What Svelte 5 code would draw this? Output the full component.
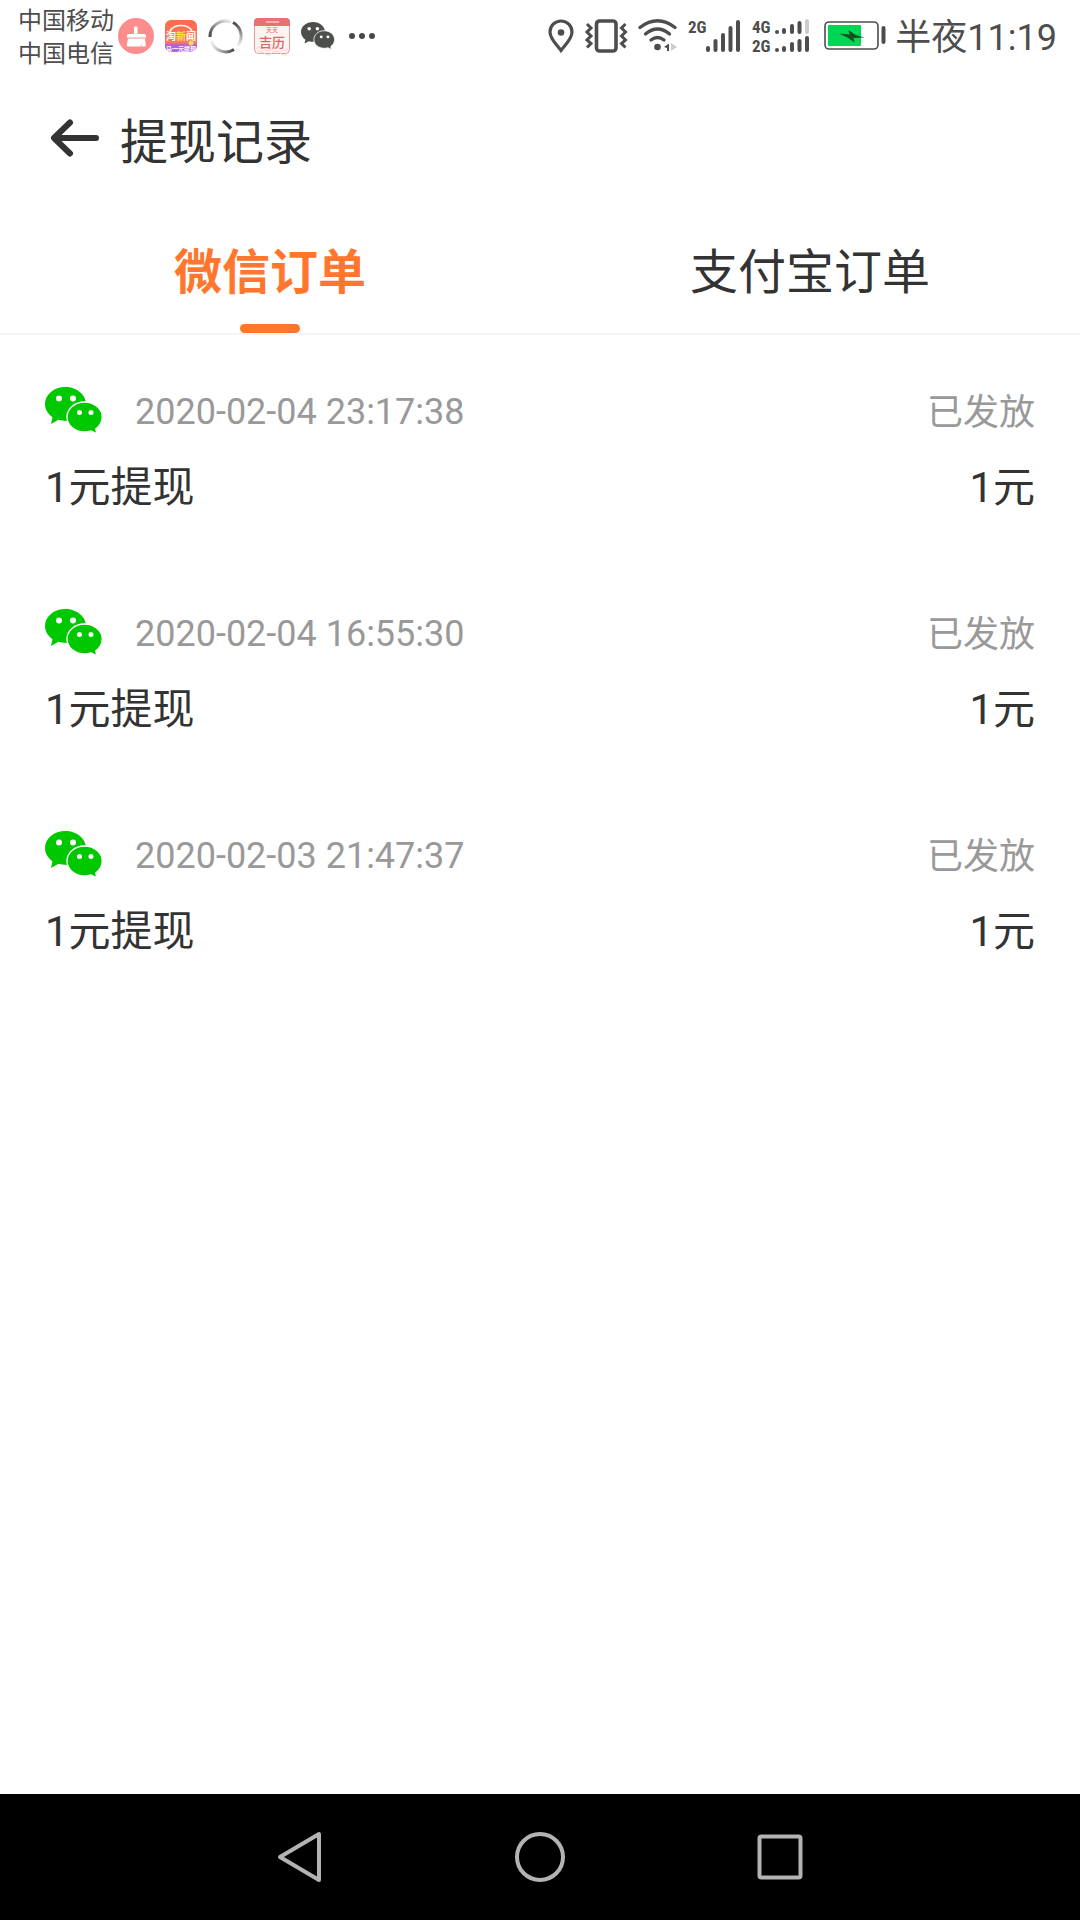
<script lang="ts">
  const tabs = [
    { id: 'wechat', label: '微信订单' },
    { id: 'alipay', label: '支付宝订单' },
  ];

  const orders = [
    { time: '2020-02-04 23:17:38', status: '已发放', title: '1元提现', amount: '1元' },
    { time: '2020-02-04 16:55:30', status: '已发放', title: '1元提现', amount: '1元' },
    { time: '2020-02-03 21:47:37', status: '已发放', title: '1元提现', amount: '1元' },
  ];

  let active = $state('wechat');
</script>

<div class="screen">
  <div class="status-bar">
    <div class="status-left">
      <div class="carriers">
        <span>中国移动</span>
        <span>中国电信</span>
      </div>
      <div class="notices">
        <svg width="36" height="36" viewBox="0 0 36 36">
          <circle cx="18" cy="18" r="18" fill="#fd8d8d" />
          <path d="M16 10a1.700 1.700 0 0 1 3.500 0v6h7a1.500 1.500 0 0 1 1.500 1.500v2h-19v-2a1.500 1.500 0 0 1 1.500-1.500h5.500z" fill="#fff" />
          <path d="M10 20.500h17l.8 8h-4.300v-3l-1 3h-12.500c-1 0-1.400-.6-1.200-1.400z" fill="#fff" />
        </svg>
        <svg width="32" height="34" viewBox="0 0 32 34">
          <defs>
            <linearGradient id="news" x1="0" y1="0" x2="0" y2="1">
              <stop offset="0" stop-color="#fb6a4b" />
              <stop offset="0.7" stop-color="#fb7a60" />
              <stop offset="0.78" stop-color="#b162d8" />
              <stop offset="1" stop-color="#b368dc" />
            </linearGradient>
          </defs>
          <rect y="1" width="32" height="32" rx="6" fill="url(#news)" />
          <path d="M5 12a12 9 0 0 1 22 0" fill="none" stroke="#fff" stroke-width="1.500" />
          <text x="16" y="21" class="news-name">淘<tspan fill="#ffe14d">新</tspan>闻</text>
          <circle cx="26" cy="24" r="2.500" fill="#ffd95a" />
          <text x="16" y="32" class="news-note">马一元提现</text>
        </svg>
        <svg width="35" height="36" viewBox="0 0 35 36" fill="none" stroke-width="3">
          <defs>
            <linearGradient id="arcA" x1="0" y1="1" x2="1" y2="0">
              <stop offset="0" stop-color="#444" />
              <stop offset="1" stop-color="#eee" />
            </linearGradient>
            <linearGradient id="arcB" x1="0" y1="0" x2="0" y2="1">
              <stop offset="0" stop-color="#444" />
              <stop offset="1" stop-color="#f2f2f2" />
            </linearGradient>
            <linearGradient id="arcC" x1="0" y1="0" x2="1" y2="0">
              <stop offset="0" stop-color="#f2f2f2" />
              <stop offset="1" stop-color="#444" />
            </linearGradient>
          </defs>
          <path d="M2 19a15.500 15.500 0 0 1 21-15" stroke="url(#arcA)" />
          <path d="M25 4.500a15.500 15.500 0 0 1 5 23" stroke="url(#arcB)" />
          <path d="M3 23a15.500 15.500 0 0 0 23 8.500" stroke="url(#arcC)" />
        </svg>
        <svg width="36" height="36" viewBox="0 0 36 36">
          <rect x="0.500" y="0.500" width="35" height="35" rx="4" fill="#fdf4f2" stroke="#e99" />
          <path d="M0 8v-4a4 4 0 0 1 4-4h28a4 4 0 0 1 4 4v4z" fill="#e57373" />
          <path d="M12 4h13" stroke="#f8c9c9" stroke-width="1.500" />
          <path d="M2 31q4-4 8 0t8 0t8 0t8 0M2 35q4-4 8 0t8 0t8 0t8 0" fill="none" stroke="#f6d6d0" />
          <text x="18" y="14" class="cal-small">天天</text>
          <text x="18" y="29" class="cal-name">吉历</text>
        </svg>
        <svg width="34" height="30" viewBox="0 0 58 48">
          {@render bubbles('#4c4f4c')}
        </svg>
        <svg width="32" height="6" viewBox="0 0 32 6" fill="#484848">
          <circle cx="6" cy="3" r="3" />
          <circle cx="16" cy="3" r="3" />
          <circle cx="26" cy="3" r="3" />
        </svg>
      </div>
    </div>

    <div class="status-right">
      <svg width="26" height="34" viewBox="0 0 26 34">
        <path d="M13 31.500C9 26 2 20 2 13a11 11 0 0 1 22 0c0 7-7 13-11 18.500z" fill="none" stroke="#4d4d4d" stroke-width="3.200" />
        <circle cx="13" cy="13.500" r="3.300" fill="#4d4d4d" />
      </svg>
      <svg width="42" height="34" viewBox="0 0 42 34" fill="none" stroke="#4d4d4d" stroke-width="3">
        <rect x="11.500" y="2" width="19.500" height="30" rx="3" stroke-width="3.600" />
        <path d="M2 5l4 4-4 4 4 4-4 4 4 3.500-4 4M40.500 5l-4 4 4 4-4 4 4 4-4 3.500 4 4" />
      </svg>
      <svg width="39" height="34" viewBox="0 0 39 34" fill="none" stroke="#4d4d4d" stroke-width="3.400" stroke-linecap="round">
        <path d="M2 8.500q17.500-13.500 35 0M7.500 15q12-10 24 0M13 21q6.500-5 13 0" />
        <circle cx="19.500" cy="28" r="3.300" fill="#4d4d4d" stroke="none" />
        <path d="M31 24.500v7.500h-2v-3l-3-1z" fill="#4d4d4d" stroke="none" />
        <path d="M33 24l6 4-6 4z" fill="#ccc" stroke="none" />
      </svg>
      <svg width="53" height="36" viewBox="0 0 53 36" fill="none" stroke="#4d4d4d" stroke-width="4" stroke-linecap="round">
        <text x="0" y="15" class="net">2G</text>
        <path d="M20 30v2M27.500 23v9M35 17v15M42.500 10v22M50 4v28" />
      </svg>
      <svg width="58" height="36" viewBox="0 0 58 36" fill="none" stroke="#4d4d4d" stroke-width="4" stroke-linecap="round">
        <text x="0" y="15" class="net">4G</text>
        <text x="0" y="34" class="net">2G</text>
        <path d="M25 14v0M32 12v2M40 8v6M47.500 5v9M25 32v0M32 30v2M40 26v6M47.500 23v9M55 20v12" />
        <path d="M55 3v11" stroke="#ccc" />
      </svg>
      <svg class="battery" width="62" height="30" viewBox="0 0 62 30">
        <rect x="1" y="1" width="53" height="27" rx="4" fill="#fff" stroke="#4d4d4d" stroke-width="1.600" />
        <rect x="4" y="4" width="33" height="21" rx="1" fill="#00d656" />
        <path d="M15 12.500l10.500 1-1-4.500 7 5 9 2.500-11 .5 1 4.500-7-5z" fill="#154f20" />
        <path d="M59.500 7v14" stroke="#4d4d4d" stroke-width="4" stroke-linecap="round" />
      </svg>
      <span class="clock">半夜11:19</span>
    </div>
  </div>

  <header class="header">
    <button class="back" aria-label="返回">
      <svg width="50" height="38" viewBox="0 0 50 38" fill="none" stroke="#333" stroke-width="6" stroke-linecap="round" stroke-linejoin="round">
        <path d="M20 3.500L4 19l16 15.500M5 19h41" />
      </svg>
    </button>
    <h1>提现记录</h1>
  </header>

  <div class="tabs" role="tablist">
    {#each tabs as tab}
      <button
        class="tab"
        class:active={active === tab.id}
        role="tab"
        aria-selected={active === tab.id}
        onclick={() => (active = tab.id)}
      >
        {tab.label}
      </button>
    {/each}
  </div>

  <main>
    {#if active === 'wechat'}
      <ul class="orders">
        {#each orders as order}
          <li class="order">
            <div class="row meta">
              <svg class="logo" width="58" height="48" viewBox="0 0 58 48">
                {@render bubbles('#00c800')}
              </svg>
              <time>{order.time}</time>
              <span class="state">{order.status}</span>
            </div>
            <div class="row detail">
              <span>{order.title}</span>
              <span>{order.amount}</span>
            </div>
          </li>
        {/each}
      </ul>
    {/if}
  </main>

  <nav class="nav-bar">
    <button aria-label="后退">
      <svg width="50" height="54" viewBox="0 0 50 54">
        <path d="M44 4v46L5 27z" />
      </svg>
    </button>
    <button aria-label="主屏幕">
      <svg width="54" height="54" viewBox="0 0 54 54">
        <circle cx="27" cy="27" r="23" />
      </svg>
    </button>
    <button aria-label="最近任务">
      <svg width="54" height="54" viewBox="0 0 54 54">
        <rect x="6.500" y="6.500" width="41" height="41" rx="2" />
      </svg>
    </button>
  </nav>
</div>

{#snippet bubbles(color: string)}
  <path d="M20.500 0C9 0 0 7.500 0 17c0 5.500 3 10 7.500 13.200L6 37l7.500-4.200c2.500.7 5 1.200 8.500 1.200 11-.5 19-8 19-17S32 0 20.500 0z" fill={color} />
  <path d="M39.500 15C29.500 15 22 21.800 22 30s7.500 15 17.500 15c2.500 0 4.500-.4 6.500-1l6 3-1.200-5c4-3 6.500-7 6.500-12 0-8.200-7.800-15-17.800-15z" fill={color} stroke="#fff" stroke-width="1.400" />
  <circle cx="14" cy="11.500" r="3" fill="#fff" />
  <circle cx="28" cy="11.500" r="3" fill="#fff" />
  <circle cx="34.500" cy="25.500" r="2.500" fill="#fff" />
  <circle cx="46" cy="25.500" r="2.500" fill="#fff" />
{/snippet}

<style>
  :global(body) { margin: 0; background: #fff; }
  .screen {
    min-height: 100vh; display: flex; flex-direction: column;
    font-family: Roboto, 'Noto Sans CJK SC', sans-serif; color: #333; background: #fff;
  }
  svg { display: block; flex: none; overflow: visible; }
  button { border: 0; padding: 0; background: none; font: inherit; color: inherit; cursor: pointer; }

  .status-bar { display: flex; justify-content: space-between; align-items: center; height: 72px; padding: 0 23px 0 18px; color: #4d4d4d; }
  .status-left, .status-right, .notices { display: flex; align-items: center; }
  .status-left { gap: 4px; }
  .carriers { display: flex; flex-direction: column; padding-top: 4px; font-size: 24px; line-height: 33px; }
  .notices { gap: 11px; }
  .status-right { gap: 11px; }
  .battery { margin-left: 3px; }
  .clock { margin-left: -2px; padding-top: 4px; font-size: 36px; line-height: 48px; }
  .net { font: bold 17px 'Roboto Condensed', Roboto, sans-serif; fill: #4d4d4d; stroke: none; }
  .news-name { font: bold 10px 'Noto Sans CJK SC', sans-serif; fill: #fff; text-anchor: middle; }
  .news-note { font: bold 6px 'Noto Sans CJK SC', sans-serif; fill: #fff; text-anchor: middle; }
  .cal-small { font: 6px 'Noto Sans CJK SC', sans-serif; fill: #e06666; text-anchor: middle; }
  .cal-name { font: 500 13px 'Noto Sans CJK SC', sans-serif; fill: #e06666; text-anchor: middle; }

  .header { display: flex; align-items: center; gap: 20px; height: 132px; padding: 0 50px; }
  h1 { margin: 0; padding-top: 10px; font-size: 48px; font-weight: 400; line-height: 72px; }

  .tabs { display: flex; border-bottom: 2px solid #f5f5f5; }
  .tab { position: relative; flex: 1; height: 129px; padding-top: 8px; font-size: 48px; line-height: 72px; }
  .tab.active { color: #ff772e; font-weight: 700; }
  .tab.active::after {
    content: ''; position: absolute; left: 50%; bottom: 0; width: 60px; height: 9px;
    margin-left: -30px; border-radius: 5px; background: #ff772e;
  }

  main { flex: 1; }
  .orders { margin: 0; padding: 0; list-style: none; }
  .order { padding: 47px 45px 38px; }
  .row { display: flex; align-items: center; }
  .meta { height: 57px; font-size: 36px; color: #999; }
  .meta time { padding-top: 2px; }
  .logo { margin-right: 32px; }
  .state { margin-left: auto; padding-top: 4px; line-height: 54px; }
  .detail { justify-content: space-between; height: 72px; margin-top: 8px; font-size: 42px; }

  .nav-bar { display: flex; justify-content: center; height: 126px; background: #000; }
  .nav-bar button { display: flex; align-items: center; justify-content: center; width: 240px; }
  .nav-bar svg { fill: none; stroke: #b3b3b3; stroke-width: 4; stroke-linejoin: round; }
</style>
